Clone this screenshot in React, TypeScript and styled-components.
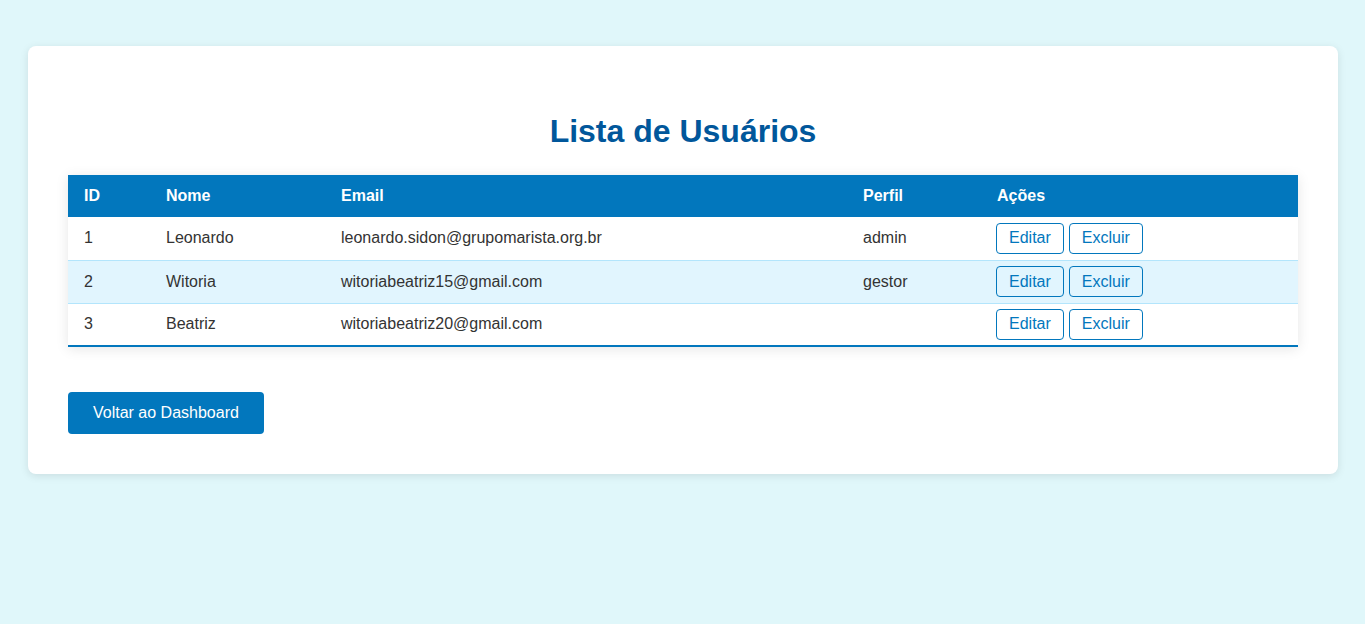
import React from "react";
import styled, { createGlobalStyle } from "styled-components";

const GlobalStyle = createGlobalStyle`
  html, body {
    margin: 0;
    padding: 0;
    background: #e0f7fa;
    font-family: "Liberation Sans", Arial, sans-serif;
  }
`;

const Page = styled.div`
  padding: 46px 27px 40px 28px;
`;

const Card = styled.div`
  background: #ffffff;
  border-radius: 8px;
  box-shadow: 0 2px 8px rgba(0, 0, 0, 0.1);
  padding: 40px;
`;

const Title = styled.h2`
  margin: 27px 0 25px;
  text-align: center;
  font-size: 32px;
  font-weight: bold;
  color: #01579b;
  line-height: 37px;
`;

const Table = styled.table`
  width: 100%;
  border-collapse: collapse;
  box-shadow: 0 2px 12px rgba(0, 0, 0, 0.1);
  border-bottom: 2px solid #0277bd;
  font-size: 16px;
`;

const Th = styled.th<{ $w?: number }>`
  background: #0277bd;
  color: #ffffff;
  text-align: left;
  font-weight: bold;
  height: 42px;
  padding: 0 16px;
  box-sizing: border-box;
  ${(p) => (p.$w ? `width: ${p.$w}px;` : "")}
`;

const Tr = styled.tr<{ $alt?: boolean }>`
  background: ${(p) => (p.$alt ? "#e1f5fe" : "#ffffff")};
  border-bottom: 1px solid #b3e5fc;
  &:last-child {
    border-bottom: none;
  }
`;

const Td = styled.td`
  color: #333333;
  height: 43px;
  padding: 0 16px;
  box-sizing: border-box;
  vertical-align: middle;
`;

const Actions = styled.div`
  display: flex;
  gap: 5px;
  margin-left: -1px;
`;

const SmallButton = styled.button`
  font-family: "Liberation Sans", Arial, sans-serif;
  font-size: 16px;
  color: #0277bd;
  background: transparent;
  border: 1px solid #0277bd;
  border-radius: 4px;
  height: 31px;
  padding: 0 12px;
  cursor: pointer;
`;

const Footer = styled.div`
  margin-top: 45px;
`;

const PrimaryButton = styled.button`
  font-family: "Liberation Sans", Arial, sans-serif;
  font-size: 16px;
  color: #ffffff;
  background: #0277bd;
  border: none;
  border-radius: 4px;
  height: 42px;
  padding: 0 25px;
  cursor: pointer;
`;

const users = [
  { id: 1, nome: "Leonardo", email: "leonardo.sidon@grupomarista.org.br", perfil: "admin" },
  { id: 2, nome: "Witoria", email: "witoriabeatriz15@gmail.com", perfil: "gestor" },
  { id: 3, nome: "Beatriz", email: "witoriabeatriz20@gmail.com", perfil: "" },
];

export default function App() {
  return (
    <>
      <GlobalStyle />
      <Page>
        <Card>
          <Title>Lista de Usuários</Title>
          <Table>
            <thead>
              <tr>
                <Th $w={82}>ID</Th>
                <Th $w={175}>Nome</Th>
                <Th $w={522}>Email</Th>
                <Th $w={134}>Perfil</Th>
                <Th>Ações</Th>
              </tr>
            </thead>
            <tbody>
              {users.map((u, i) => (
                <Tr key={u.id} $alt={i % 2 === 1}>
                  <Td>{u.id}</Td>
                  <Td>{u.nome}</Td>
                  <Td>{u.email}</Td>
                  <Td>{u.perfil}</Td>
                  <Td>
                    <Actions>
                      <SmallButton>Editar</SmallButton>
                      <SmallButton>Excluir</SmallButton>
                    </Actions>
                  </Td>
                </Tr>
              ))}
            </tbody>
          </Table>
          <Footer>
            <PrimaryButton>Voltar ao Dashboard</PrimaryButton>
          </Footer>
        </Card>
      </Page>
    </>
  );
}
